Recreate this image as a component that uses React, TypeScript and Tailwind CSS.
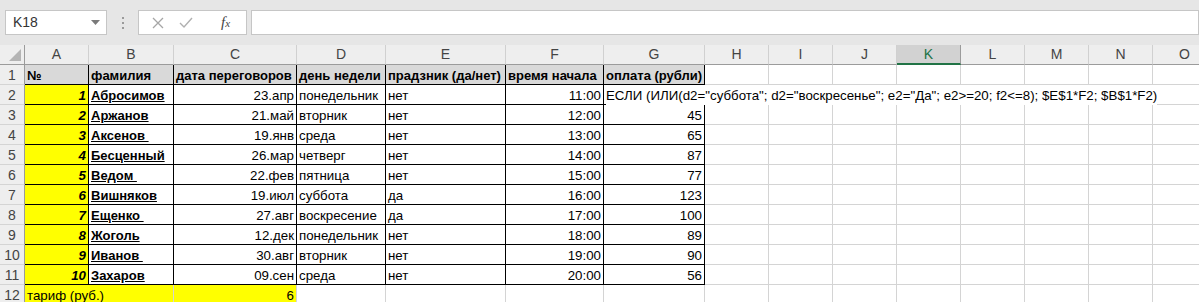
import React from 'react';

const COLS = ['A', 'B', 'C', 'D', 'E', 'F', 'G', 'H', 'I', 'J', 'K', 'L', 'M', 'N', 'O'];

const FORMULA =
  'ЕСЛИ (ИЛИ(d2="суббота"; d2="воскресенье"; e2="Да"; e2>=20; f2<=8); $E$1*F2; $B$1*F2)';

const rows = [
  ['1', 'Абросимов', '23.апр', 'понедельник', 'нет', '11:00', FORMULA],
  ['2', 'Аржанов', '21.май', 'вторник', 'нет', '12:00', '45'],
  ['3', 'Аксенов ', '19.янв', 'среда', 'нет', '13:00', '65'],
  ['4', 'Бесценный', '26.мар', 'четверг', 'нет', '14:00', '87'],
  ['5', 'Ведом ', '22.фев', 'пятница', 'нет', '15:00', '77'],
  ['6', 'Вишняков', '19.июл', 'суббота', 'да', '16:00', '123'],
  ['7', 'Ещенко ', '27.авг', 'воскресение', 'да', '17:00', '100'],
  ['8', 'Жоголь', '12.дек', 'понедельник', 'нет', '18:00', '89'],
  ['9', 'Иванов ', '30.авг', 'вторник', 'нет', '19:00', '90'],
  ['10', 'Захаров', '09.сен', 'среда', 'нет', '20:00', '56'],
];

const headers = ['№', 'фамилия', 'дата переговоров', 'день недели', 'прадзник (да/нет)', 'время начала', 'оплата (рубли)'];

function Cell({ children, className = '' }: { children?: React.ReactNode; className?: string }) {
  return (
    <div className={`flex items-center pt-[2px] px-[2px] whitespace-pre border-r border-b ${className}`}>
      {children}
    </div>
  );
}

function RowNum({ n }: { n: number }) {
  return (
    <div className="flex items-center justify-center pt-[2px] bg-[#eeeeee] border-b border-r border-b-[#d4d4d4] border-r-[#9b9b9b] text-[14px] text-[#444]">
      {n}
    </div>
  );
}

export default function App() {
  return (
    <div className="w-[1199px] h-[302px] overflow-hidden bg-white text-[13.3px] text-black font-['Liberation_Sans',sans-serif]">
      {/* formula bar */}
      <div className="h-[45px] bg-[#e6e6e6] flex items-start pt-[10px] text-[14px]">
        <div className="ml-[5px] w-[102px] h-[25px] bg-white border border-[#c6c6c6] flex items-center justify-between pl-[7px] pr-[6px] text-[#333]">
          <span>K18</span>
          <svg width="9" height="5" viewBox="0 0 9 5">
            <path d="M0 0 L9 0 L4.5 5 Z" fill="#7a7a7a" />
          </svg>
        </div>
        <div className="w-[31px] h-[25px] flex flex-col items-center justify-center gap-[3px]">
          <span className="w-[2px] h-[2px] bg-[#9a9a9a]" />
          <span className="w-[2px] h-[2px] bg-[#9a9a9a]" />
          <span className="w-[2px] h-[2px] bg-[#9a9a9a]" />
        </div>
        <div className="w-[109px] h-[25px] bg-white border border-[#c6c6c6] flex items-center">
          <svg width="12" height="12" viewBox="0 0 12 12" className="ml-[13px]">
            <path d="M1 1 L11 11 M11 1 L1 11" stroke="#a6a6a6" strokeWidth="1.3" />
          </svg>
          <svg width="14" height="12" viewBox="0 0 14 12" className="ml-[15px]">
            <path d="M1 6 L5 10 L13 1" stroke="#b0b0b0" strokeWidth="1.4" fill="none" />
          </svg>
          <span className="ml-[28px] font-['Liberation_Serif',serif] italic text-[15px] text-[#444]">
            f<span className="text-[11px]">x</span>
          </span>
        </div>
        <div className="ml-[4px] flex-1 h-[25px] bg-white border border-[#c6c6c6]" />
      </div>

      {/* grid */}
      <div className="grid grid-cols-[25px_64px_85px_123px_89px_120px_98px_101px_64px_64px_64px_64px_64px_64px_64px_64px] auto-rows-[20px] w-[1217px]">
        {/* column headers */}
        <div className="relative bg-[#eeeeee] border-r border-b border-[#9b9b9b]">
          <svg width="12" height="12" viewBox="0 0 12 12" className="absolute right-[3px] bottom-[3px]">
            <path d="M12 0 L12 12 L0 12 Z" fill="#b4b4b4" />
          </svg>
        </div>
        {COLS.map((c) => (
          <div
            key={c}
            className={`flex items-center justify-center border-r text-[14px] ${
              c === 'K'
                ? 'bg-[#d2d2d2] border-r-[#9b9b9b] border-b-2 border-b-[#217346] text-[#217346]'
                : 'bg-[#eeeeee] border-b border-r-[#d0d0d0] border-b-[#9b9b9b] text-[#444]'
            }`}
          >
            {c}
          </div>
        ))}

        {/* row 1 */}
        <RowNum n={1} />
        {headers.map((h) => (
          <Cell key={h} className="bg-[#d9d9d9] border-black font-bold overflow-hidden text-[13px]">
            {h}
          </Cell>
        ))}
        {COLS.slice(7).map((c) => (
          <Cell key={c} className="border-[#d4d4d4]" />
        ))}

        {/* rows 2-11 */}
        {rows.map((r, ri) => (
          <React.Fragment key={ri}>
            <RowNum n={ri + 2} />
            <Cell className="bg-[#ffff00] border-black justify-end font-bold italic">{r[0]}</Cell>
            <Cell className="border-black font-bold underline text-[13px]">{r[1]}</Cell>
            <Cell className="border-black justify-end">{r[2]}</Cell>
            <Cell className="border-black">{r[3]}</Cell>
            <Cell className="border-black">{r[4]}</Cell>
            <Cell className="border-black justify-end">{r[5]}</Cell>
            {ri === 0 ? (
              <Cell className="border-b-black border-r-transparent relative z-10 overflow-visible">
                <span className="bg-white">{r[6]}</span>
              </Cell>
            ) : (
              <Cell className="border-black justify-end">{r[6]}</Cell>
            )}
            {COLS.slice(7).map((c, ci) => (
              <Cell
                key={c}
                className={ri === 0 && ci < 7 ? 'border-b-[#d4d4d4] border-r-transparent' : 'border-[#d4d4d4]'}
              />
            ))}
          </React.Fragment>
        ))}

        {/* row 12 */}
        <RowNum n={12} />
        <Cell className="bg-[#ffff00] border-r-transparent border-b-[#d4d4d4] relative z-10 overflow-visible">
          тариф (руб.)
        </Cell>
        <Cell className="bg-[#ffff00] border-[#d4d4d4]" />
        <Cell className="bg-[#ffff00] border-[#d4d4d4] justify-end">6</Cell>
        {COLS.slice(3).map((c) => (
          <Cell key={c} className="border-[#d4d4d4]" />
        ))}
      </div>
    </div>
  );
}
